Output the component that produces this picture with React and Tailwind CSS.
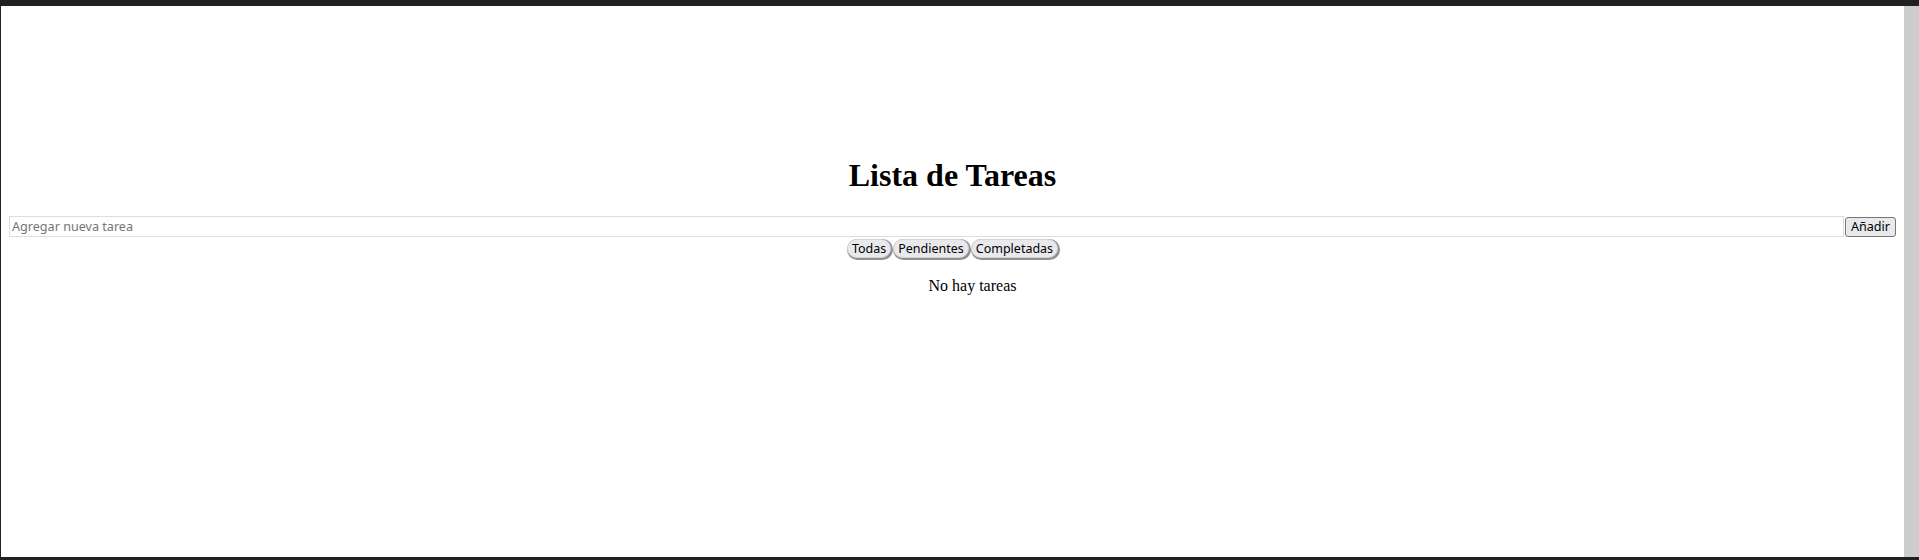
import { useState } from "react";

function App() {
  const [tasks, setTasks] = useState([]);
  const [text, setText] = useState("");
  const [filter, setFilter] = useState("todas");

  const addTask = () => {
    if (!text.trim()) return;
    setTasks([...tasks, { id: Date.now(), text: text.trim(), done: false }]);
    setText("");
  };

  const visible = tasks.filter((t) =>
    filter === "pendientes" ? !t.done : filter === "completadas" ? t.done : true
  );

  const filterBtn =
    "px-[4px] h-[19px] leading-[17px] rounded-[10px] bg-[#e9e9ed] border border-[#d4d4d4] shadow-[1px_1px_0_1px_#8f8f8f] text-[12.5px] text-black";

  return (
    <div className="w-full h-[560px] bg-[#202020] pt-[6px] pl-px pb-[3px] flex">
      <div className="flex-1 bg-white flex">
        <div className="flex-1 px-2 pt-[151px] font-['Liberation_Serif',serif] text-black">
          <h1 className="text-[32px] font-bold leading-[37px] text-center mb-[22px]">
            Lista de Tareas
          </h1>
          <div className="flex items-center gap-px font-['Noto_Sans',sans-serif]">
            <input
              type="text"
              value={text}
              onChange={(e) => setText(e.target.value)}
              placeholder="Agregar nueva tarea"
              className="flex-1 h-[21px] border border-[#dedede] px-[2px] text-[12.6px] placeholder:text-[#757575] outline-none"
            />
            <button
              type="button"
              onClick={addTask}
              className="h-[20px] px-[5px] leading-[18px] rounded-[3px] border border-[#767676] bg-[#e9e9ed] text-[12.6px]"
            >
              Añadir
            </button>
          </div>
          <div className="flex justify-center gap-[2px] mt-[2px] font-['Noto_Sans',sans-serif]">
            <button type="button" onClick={() => setFilter("todas")} className={filterBtn}>
              Todas
            </button>
            <button type="button" onClick={() => setFilter("pendientes")} className={filterBtn}>
              Pendientes
            </button>
            <button type="button" onClick={() => setFilter("completadas")} className={filterBtn}>
              Completadas
            </button>
          </div>
          <ul className="mt-[19px] pl-10 text-center text-[16px] leading-[18px]">
            {visible.length === 0 ? (
              <li>No hay tareas</li>
            ) : (
              visible.map((t) => <li key={t.id}>{t.text}</li>)
            )}
          </ul>
        </div>
        <div className="w-[15px] bg-[#cdcdcd]"></div>
      </div>
    </div>
  );
}

export default App;
